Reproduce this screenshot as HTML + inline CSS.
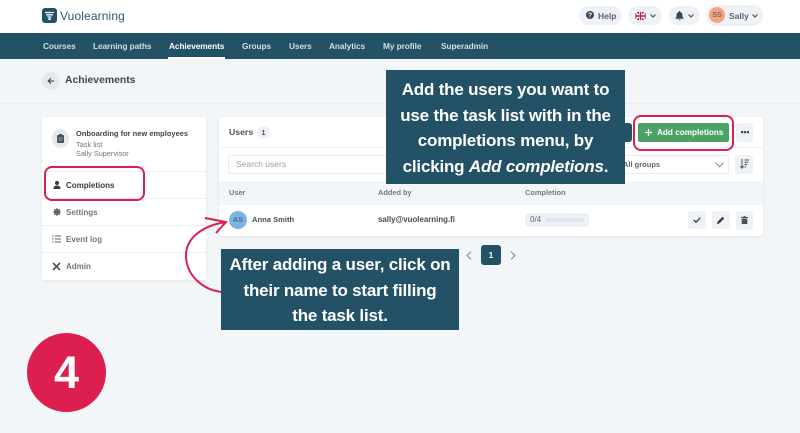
<!DOCTYPE html>
<html><head><meta charset="utf-8"><style>
*{box-sizing:border-box}
html,body{margin:0;padding:0}
body{width:800px;height:433px;overflow:hidden;background:#f3f6f9;position:relative;font-family:"Liberation Sans",sans-serif;color:#3c4650}
.a{position:absolute;white-space:nowrap}
.b{font-weight:700}
.card{position:absolute;background:#fff;border-radius:3px;box-shadow:0 1px 3px rgba(40,70,90,.1)}
.nav{position:absolute;top:41px;font-size:8.3px;font-weight:700;color:#d3dfe5;white-space:nowrap;letter-spacing:-.08px}
.pill{position:absolute;background:#eef2f6;border-radius:13px}
.btn{position:absolute;background:#eef2f6;border-radius:3px}
.hl{position:absolute;border:2px solid #dc1f4f;border-radius:8px}
.call{position:absolute;background:#235166;color:#fff;font-weight:700;text-align:center;white-space:nowrap;font-size:17px;letter-spacing:-.2px;line-height:25.5px}
.line{position:absolute;left:0;right:0;height:1px;background:#eef1f4}
.m{font-size:8px;font-weight:700;color:#6f777f;left:66px}
svg{position:absolute;overflow:visible}
</style></head><body>
<div class="a" style="left:0;top:0;width:800px;height:33px;background:#fff"></div>
<svg style="left:42px;top:8px" width="15" height="15" viewBox="0 0 15 15"><rect width="15" height="15" rx="3" fill="#235166"/><path d="M3 4.500h9M4.200 6.800h6.600M5.500 9h4" stroke="#fff" stroke-width="1.300" fill="none"/><rect x="6.300" y="10.200" width="2.400" height="1.800" fill="#fff"/></svg>
<div class="a" style="left:60px;top:9px;font-size:12px;font-weight:400;color:#2d5a6e;letter-spacing:.12px">Vuolearning</div>
<div class="pill" style="left:579px;top:6px;width:43px;height:19px"></div>
<svg style="left:586px;top:11px" width="8" height="8" viewBox="0 0 8 8"><circle cx="4" cy="4" r="4" fill="#3c4650"/><text x="4" y="6.500" font-size="7" font-weight="700" text-anchor="middle" fill="#eef2f6" font-family="Liberation Sans">?</text></svg>
<div class="a b" style="left:598px;top:11px;font-size:8.500px;color:#5c656d">Help</div>
<div class="pill" style="left:628px;top:6px;width:34px;height:19px"></div>
<svg style="left:635px;top:12px" width="11" height="8" viewBox="0 0 11 8"><rect width="11" height="8" fill="#27306e"/><path d="M0 0L11 8M11 0L0 8" stroke="#fff" stroke-width="1.600"/><path d="M5.500 0V8M0 4H11" stroke="#fff" stroke-width="3"/><path d="M5.500 0V8M0 4H11" stroke="#d3193f" stroke-width="1.600"/></svg>
<svg style="left:650px;top:14px" width="6" height="4" viewBox="0 0 6 4"><path d="M.5.500L3 3l2.500-2.500" stroke="#4a535b" stroke-width="1.200" fill="none"/></svg>
<div class="pill" style="left:669px;top:6px;width:31px;height:19px"></div>
<svg style="left:675px;top:11px" width="9" height="10" viewBox="0 0 9 10"><path d="M4.500 0C5 0 5.200 .5 5.200 1C7 1.500 7.500 3 7.500 4.500C7.500 6 8 7 9 7.800H0C1 7 1.500 6 1.500 4.500C1.500 3 2 1.500 3.800 1C3.800 .5 4 0 4.500 0ZM3.300 8.500H5.700C5.700 9.500 3.300 9.500 3.300 8.500Z" fill="#3c4650"/></svg>
<svg style="left:688px;top:14px" width="6" height="4" viewBox="0 0 6 4"><path d="M.5.500L3 3l2.500-2.500" stroke="#4a535b" stroke-width="1.200" fill="none"/></svg>
<div class="pill" style="left:706px;top:5px;width:57px;height:21px;border-radius:11px"></div>
<div class="a" style="left:709px;top:7px;width:16px;height:16px;border-radius:50%;background:#f4a284;color:#7b6a63;font-size:7px;font-weight:700;text-align:center;line-height:17px">SS</div>
<div class="a b" style="left:729px;top:11px;font-size:8.500px;color:#5c656d">Sally</div>
<svg style="left:752px;top:14px" width="6" height="4" viewBox="0 0 6 4"><path d="M.5.500L3 3l2.500-2.500" stroke="#4a535b" stroke-width="1.200" fill="none"/></svg>

<div class="a" style="left:0;top:33px;width:800px;height:26px;background:#235166"></div>
<div class="nav" style="left:43px">Courses</div>
<div class="nav" style="left:93px">Learning paths</div>
<div class="nav" style="left:169px;color:#fff">Achievements</div>
<div class="a" style="left:168px;top:57px;width:57px;height:2px;background:#fff"></div>
<div class="nav" style="left:242px">Groups</div>
<div class="nav" style="left:289px">Users</div>
<div class="nav" style="left:329px">Analytics</div>
<div class="nav" style="left:383px">My profile</div>
<div class="nav" style="left:441px">Superadmin</div>

<div class="a" style="left:42px;top:72px;width:18px;height:18px;border-radius:50%;background:#e3e9ef"></div>
<svg style="left:47px;top:77px" width="8" height="8" viewBox="0 0 8 8"><path d="M7 4H1.500M4 1.300L1.200 4L4 6.700" stroke="#4a535b" stroke-width="1.300" fill="none"/></svg>
<div class="a b" style="left:65px;top:75px;font-size:10.400px;color:#3c4650">Achievements</div>
<div class="a" style="left:0;top:103px;width:800px;height:1px;background:#e8edf1"></div>

<div class="card" style="left:42px;top:117px;width:164px;height:163px">
<div class="line" style="top:54px"></div><div class="line" style="top:81px"></div><div class="line" style="top:108px"></div><div class="line" style="top:135px"></div>
</div>
<div class="a" style="left:52px;top:129px;width:17px;height:19px;border-radius:50%;background:#e3e9ef"></div>
<svg style="left:57px;top:134px" width="7" height="9" viewBox="0 0 7 9"><rect y="1" width="7" height="8" rx="1" fill="#4a535b"/><rect x="2" width="3" height="2" fill="#4a535b"/><path d="M1.500 4h4M1.500 6h4" stroke="#e3e9ef" stroke-width=".6"/></svg>
<div class="a b" style="left:76px;top:129px;font-size:7.500px;color:#3c4650">Onboarding for new employees</div>
<div class="a" style="left:76px;top:140px;font-size:7.400px;color:#6f777f">Task list</div>
<div class="a" style="left:76px;top:149px;font-size:7.300px;color:#6f777f">Sally Supervisor</div>
<svg style="left:53px;top:181px" width="8" height="8" viewBox="0 0 8 8"><circle cx="4" cy="2" r="2" fill="#333c44"/><path d="M.5 8C.5 5.500 2 4.500 4 4.500S7.500 5.500 7.500 8Z" fill="#333c44"/></svg>
<div class="a b" style="left:66px;top:180.500px;font-size:8px;color:#333c44">Completions</div>
<svg style="left:53px;top:208px" width="8" height="8" viewBox="0 0 8 8"><circle cx="4" cy="4" r="2.300" fill="none" stroke="#5c656d" stroke-width="1.600"/><path d="M4 0V8M0 4H8M1.200 1.200L6.800 6.800M6.800 1.200L1.200 6.800" stroke="#5c656d" stroke-width="1"/></svg>
<div class="a m" style="top:207.500px">Settings</div>
<svg style="left:52px;top:235px" width="9" height="8" viewBox="0 0 9 8"><path d="M0 1H1.500M0 4H1.500M0 7H1.500M3 1H9M3 4H9M3 7H9" stroke="#5c656d" stroke-width="1"/></svg>
<div class="a m" style="top:235px">Event log</div>
<svg style="left:52px;top:262px" width="9" height="9" viewBox="0 0 9 9"><path d="M1 1L8 8M8 1L1 8" stroke="#4a535b" stroke-width="1.600"/></svg>
<div class="a m" style="top:262px">Admin</div>
<div class="hl" style="left:44px;top:166px;width:101px;height:35px"></div>

<div class="card" style="left:219px;top:117px;width:544px;height:119px">
<div class="line" style="top:30px"></div>
<div class="a" style="left:0;top:64px;width:544px;height:24px;background:#f3f6f9"></div>
</div>
<div class="a b" style="left:229px;top:127px;font-size:8.700px;color:#4a535b">Users</div>
<div class="a" style="left:257px;top:126px;width:13px;height:13px;border-radius:50%;background:#eef2f6;font-size:7.500px;font-weight:700;text-align:center;line-height:13px;color:#4a535b">1</div>
<div class="a" style="left:228px;top:155px;width:180px;height:19px;border:1px solid #e8edf1;border-radius:2px;background:#fff"></div>
<div class="a" style="left:236px;top:159px;font-size:8.500px;color:#9aa1a8">Search users</div>
<div class="a b" style="left:229px;top:188px;font-size:7.400px;color:#6f777f">User</div>
<div class="a b" style="left:378px;top:188px;font-size:7.400px;color:#6f777f">Added by</div>
<div class="a b" style="left:525px;top:188px;font-size:7.400px;color:#6f777f">Completion</div>
<div class="a" style="left:229px;top:211px;width:18px;height:18px;border-radius:50%;background:#7db2e4;color:#4e6a86;font-size:7.500px;font-weight:700;text-align:center;line-height:18px">AS</div>
<div class="a b" style="left:252px;top:215px;font-size:7.600px;color:#444d55">Anna Smith</div>
<div class="a b" style="left:378px;top:215px;font-size:7.900px;color:#444d55">sally@vuolearning.fi</div>
<div class="a" style="left:525px;top:213px;width:64px;height:14px;background:#eef2f6;border-radius:2px"></div>
<div class="a" style="left:530px;top:215px;font-size:8px;color:#5c656d">0/4</div>
<div class="a" style="left:546px;top:218px;width:38px;height:4px;background:#e0e6ec;border-radius:2px"></div>
<div class="btn" style="left:688px;top:211px;width:18px;height:18px"></div>
<svg style="left:693px;top:217px" width="8" height="6" viewBox="0 0 8 6"><path d="M.7 3L3 5.200L7.300 .8" stroke="#333c44" stroke-width="1.300" fill="none"/></svg>
<div class="btn" style="left:712px;top:211px;width:18px;height:18px"></div>
<svg style="left:717px;top:216px" width="8" height="8" viewBox="0 0 8 8"><path d="M0 8L.5 5.800L5.500 .8L7.200 2.500L2.200 7.500Z" fill="#333c44"/></svg>
<div class="btn" style="left:736px;top:211px;width:17px;height:19px"></div>
<svg style="left:741px;top:216px" width="7" height="8" viewBox="0 0 7 8"><path d="M0 1H7V2H0ZM2.500 0H4.500V1H2.500ZM.7 2.500H6.300V8H.7Z" fill="#4a535b"/></svg>

<div class="a" style="left:616px;top:123px;width:16px;height:19px;background:#235166;border-radius:3px"></div>
<div class="a" style="left:638px;top:123px;width:91px;height:19px;background:#4ca265;border-radius:2px"></div>
<svg style="left:645px;top:129px" width="7" height="7" viewBox="0 0 7 7"><path d="M3.500 0V7M0 3.500H7" stroke="#fff" stroke-width="1.300"/></svg>
<div class="a b" style="left:657px;top:128px;font-size:8.200px;color:#fff">Add completions</div>
<div class="hl" style="left:633px;top:115px;width:101px;height:36px"></div>
<div class="btn" style="left:736px;top:123px;width:17px;height:19px"></div>
<div class="a" style="left:741px;top:131px;width:8px;height:2.500px;background:radial-gradient(circle at 1.200px 1.200px,#333c44 1.100px,transparent 1.200px) 0 0/3px 3px repeat-x"></div>
<div class="a" style="left:600px;top:155px;width:129px;height:19px;border:1px solid #e8edf1;border-radius:2px;background:#fff"></div>
<div class="a b" style="left:623px;top:160px;font-size:7.500px;color:#5c656d">All groups</div>
<svg style="left:715px;top:162px" width="9" height="6" viewBox="0 0 9 6"><path d="M.7 .7L4.500 4.800L8.300 .7" stroke="#7b838a" stroke-width="1" fill="none"/></svg>
<div class="btn" style="left:735px;top:155px;width:18px;height:19px"></div>
<svg style="left:740px;top:159px" width="9" height="10" viewBox="0 0 9 10"><path d="M2 0V9M.3 7L2 9.200L3.700 7M4.500 1H9M4.500 3.300H8M4.500 5.600H7M4.500 8H6" stroke="#4a535b" stroke-width="1" fill="none"/></svg>

<svg style="left:466px;top:251px" width="6" height="9" viewBox="0 0 6 9"><path d="M5 .7L1 4.500L5 8.300" stroke="#8b939a" stroke-width="1.200" fill="none"/></svg>
<div class="a" style="left:481px;top:245px;width:20px;height:20px;border-radius:3px;background:#235166;color:#fff;font-size:8.500px;font-weight:700;text-align:center;line-height:20px">1</div>
<svg style="left:510px;top:251px" width="6" height="9" viewBox="0 0 6 9"><path d="M1 .7L5 4.500L1 8.300" stroke="#8b939a" stroke-width="1.200" fill="none"/></svg>

<svg style="left:0;top:0" width="800" height="433" viewBox="0 0 800 433"><path d="M226 222C200 226 185 240 186 257C187 276 203 290 222 292" fill="none" stroke="#dc1f4f" stroke-width="2"/><path d="M205 218L226 222L216 233" fill="none" stroke="#dc1f4f" stroke-width="2"/></svg>

<div class="call" style="left:386px;top:70px;width:239px;height:114px;padding-top:7px">Add the users you want to<br>use the task list with in the<br>completions menu, by<br>clicking <i>Add completions</i>.</div>
<div class="call" style="left:221px;top:249px;width:238px;height:81px;padding-top:3px">After adding a user, click on<br>their name to start filling<br>the task list.</div>

<div class="a" style="left:27px;top:333px;width:79px;height:79px;border-radius:50%;background:#dc1f4f;color:#fff;font-size:45px;font-weight:700;text-align:center;line-height:79px">4</div>
</body></html>
